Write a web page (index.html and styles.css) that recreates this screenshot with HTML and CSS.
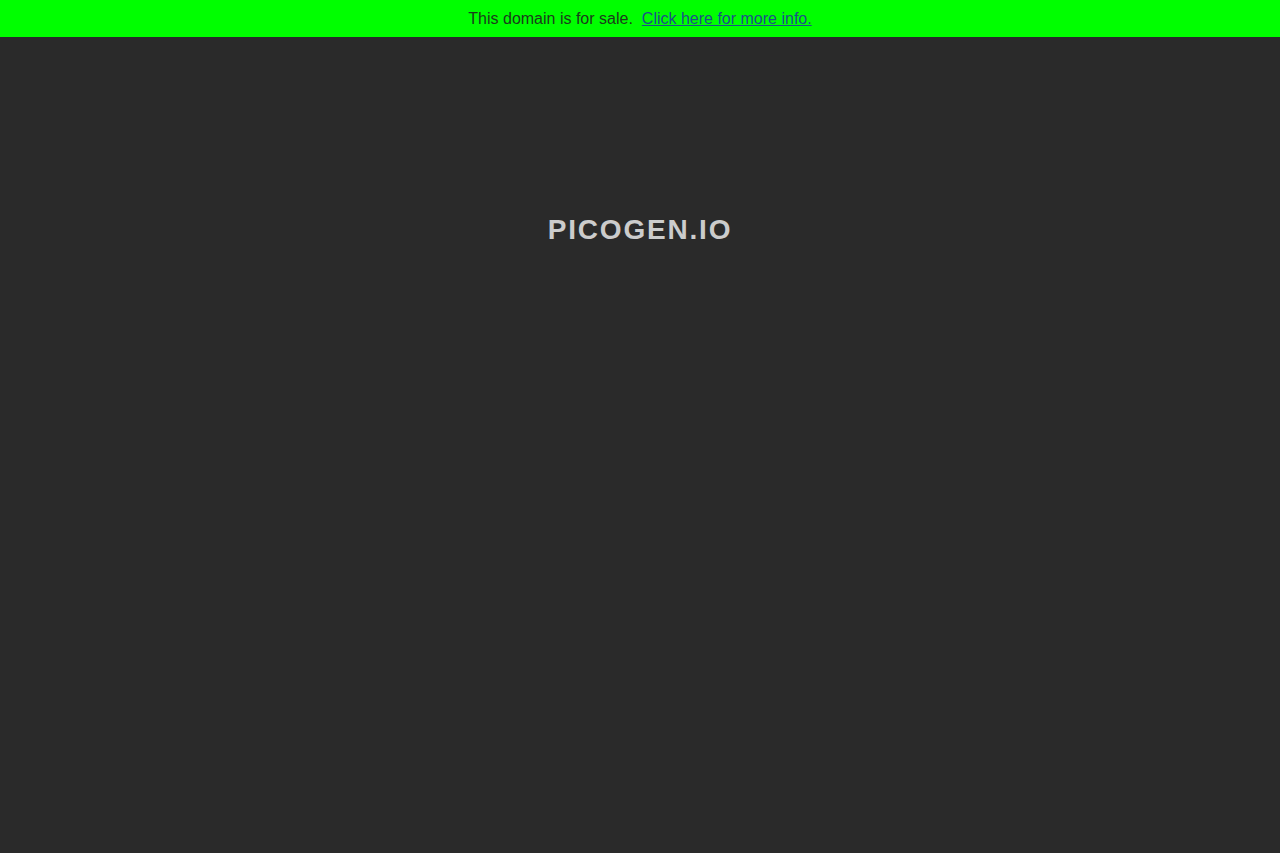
FILE: index.html
```html
<!DOCTYPE html>
<html>
<head>
<meta charset="utf-8">
<title>picogen.io</title>
<link rel="stylesheet" href="styles.css">
</head>
<body>
<div class="banner">
  <span class="sale">This domain is for sale.</span>
  <a class="info" href="#">Click here for more info.</a>
</div>
<main class="content">
  <h1 class="domain">PICOGEN.IO</h1>
</main>
</body>
</html>
```
FILE: styles.css
```css
html, body {
  margin: 0;
  padding: 0;
  height: 100%;
}
body {
  background: #2a2a2a;
  font-family: "Liberation Sans", Arial, sans-serif;
}
.banner {
  background: #00ff00;
  height: 37px;
  display: flex;
  align-items: center;
  justify-content: center;
  gap: 9px;
  font-size: 16px;
  color: #1c3a1c;
}
.info {
  color: #1c4f8a;
  text-decoration: underline;
}
.content {
  display: flex;
  justify-content: center;
  padding-top: 175px;
}
.domain {
  margin: 0;
  font-size: 28px;
  font-weight: bold;
  letter-spacing: 1.8px;
  color: #cccccc;
  line-height: 36px;
}
```
